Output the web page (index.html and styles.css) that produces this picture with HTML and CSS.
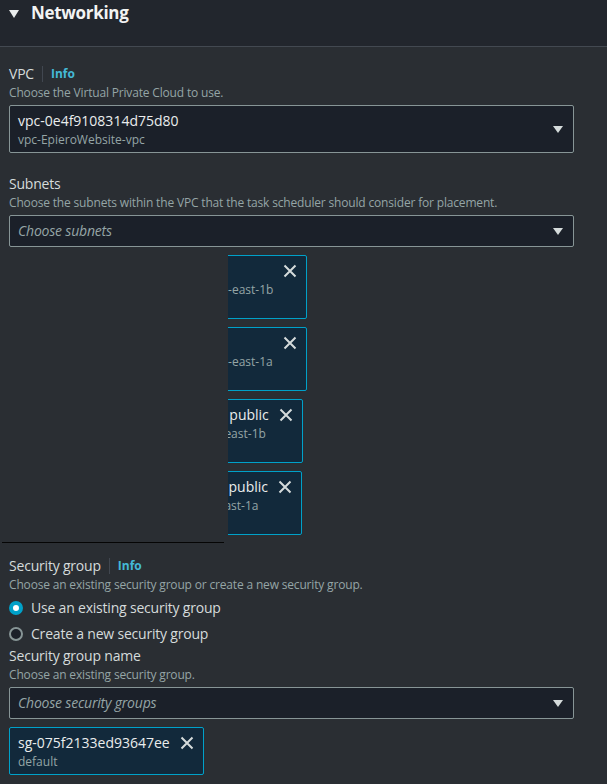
FILE: index.html
```html
<!DOCTYPE html>
<html lang="en">
<head>
    <meta charset="UTF-8">
    <meta name="viewport" content="width=device-width, initial-scale=1.0">
    <title>Networking</title>
    <link rel="stylesheet" href="styles.css">
</head>
<body>
    <div class="panel">
        <!-- section header -->
        <div class="panel-header">
            <span class="expand-icon"></span>
            <h2 class="panel-title">Networking</h2>
        </div>

        <div class="panel-body">
            <!-- VPC -->
            <div class="field">
                <div class="field-label">VPC <a class="info-link">Info</a></div>
                <div class="field-desc">Choose the Virtual Private Cloud to use.</div>
                <div class="select">
                    <div class="select-value">
                        <div class="select-main">vpc-0e4f9108314d75d80</div>
                        <div class="select-sub">vpc-EpieroWebsite-vpc</div>
                    </div>
                    <span class="select-caret"></span>
                </div>
            </div>

            <!-- Subnets -->
            <div class="field">
                <div class="field-label">Subnets</div>
                <div class="field-desc">Choose the subnets within the VPC that the task scheduler should consider for placement.</div>
                <div class="select">
                    <div class="select-placeholder">Choose subnets</div>
                    <span class="select-caret"></span>
                </div>
                <div class="token-list">
                    <div class="token">
                        <div class="token-text">
                            <div class="token-main">subnet-0b47e2c9a1d36f58e</div>
                            <div class="token-sub">EpieroWebsite-subnet-private2-lbs-us-east-1b</div>
                            <div class="token-sub">10.0.144.0/20</div>
                        </div>
                        <span class="token-dismiss"><svg viewBox="0 0 14 14"><path d="M1.5 1.5l11 11M12.5 1.5l-11 11"/></svg></span>
                    </div>
                    <div class="token">
                        <div class="token-text">
                            <div class="token-main">subnet-06a1f3d8c2e95b74d</div>
                            <div class="token-sub">EpieroWebsite-subnet-private1-lbs-us-east-1a</div>
                            <div class="token-sub">10.0.128.0/20</div>
                        </div>
                        <span class="token-dismiss"><svg viewBox="0 0 14 14"><path d="M1.5 1.5l11 11M12.5 1.5l-11 11"/></svg></span>
                    </div>
                    <div class="token">
                        <div class="token-text">
                            <div class="token-main">EpieroWebsite-subnet-useast1b public</div>
                            <div class="token-sub">subnet-0c93e1a7b5d2f4e | Zone: us-east-1b</div>
                            <div class="token-sub">10.0.16.0/20</div>
                        </div>
                        <span class="token-dismiss"><svg viewBox="0 0 14 14"><path d="M1.5 1.5l11 11M12.5 1.5l-11 11"/></svg></span>
                    </div>
                    <div class="token">
                        <div class="token-text">
                            <div class="token-main">EpieroWebsite-subnet-useast1a public</div>
                            <div class="token-sub">subnet-0e5d8b2a4c1f73 | Zone: us-east-1a</div>
                            <div class="token-sub">10.0.0.0/20</div>
                        </div>
                        <span class="token-dismiss"><svg viewBox="0 0 14 14"><path d="M1.5 1.5l11 11M12.5 1.5l-11 11"/></svg></span>
                    </div>
                    <!-- covered area of the capture -->
                    <div class="mask"></div>
                </div>
            </div>

            <!-- Security group -->
            <div class="field">
                <div class="field-label">Security group <a class="info-link">Info</a></div>
                <div class="field-desc">Choose an existing security group or create a new security group.</div>
                <div class="radio-group">
                    <label class="radio">
                        <span class="radio-dot checked"></span>
                        Use an existing security group
                    </label>
                    <label class="radio">
                        <span class="radio-dot"></span>
                        Create a new security group
                    </label>
                </div>
                <div class="field-label">Security group name</div>
                <div class="field-desc">Choose an existing security group.</div>
                <div class="select">
                    <div class="select-placeholder">Choose security groups</div>
                    <span class="select-caret"></span>
                </div>
                <div class="token-list">
                    <div class="token">
                        <div class="token-text">
                            <div class="token-main">sg-075f2133ed93647ee</div>
                            <div class="token-sub">default</div>
                        </div>
                        <span class="token-dismiss"><svg viewBox="0 0 14 14"><path d="M1.5 1.5l11 11M12.5 1.5l-11 11"/></svg></span>
                    </div>
                </div>
            </div>
        </div>
    </div>
</body>
</html>
```

FILE: styles.css
```css
body {
    margin: 0;
    background: #2a2e33;
    font-family: "Open Sans", "Noto Sans", sans-serif;
    color: #d5dbdb;
    overflow: hidden;
}

.panel-header {
    display: flex;
    align-items: flex-start;
    height: 46px;
    background: #22262d;
    border-bottom: 1px solid #434951;
}

.expand-icon {
    width: 0;
    height: 0;
    margin: 10px 12px 0 9px;
    border-left: 5px solid transparent;
    border-right: 5px solid transparent;
    border-top: 8px solid #eaeded;
}

.panel-title {
    margin: 1px 0 0;
    font-size: 17px;
    line-height: 24px;
    font-weight: 700;
    letter-spacing: -0.3px;
    color: #f2f3f3;
}

.panel-body {
    padding: 16px 33px 0 9px;
}

.field {
    margin-bottom: 20px;
}

.field-label {
    display: flex;
    align-items: center;
    font-size: 14px;
    line-height: 22px;
    letter-spacing: -0.2px;
    color: #d5dbdb;
}

.info-link {
    margin-left: 8px;
    padding-left: 8px;
    border-left: 1px solid #414750;
    font-size: 12px;
    line-height: 16px;
    font-weight: 700;
    letter-spacing: 0;
    color: #44b9d6;
}

.field-desc {
    font-size: 12px;
    line-height: 16px;
    letter-spacing: -0.17px;
    color: #95a5a6;
}

.select {
    display: flex;
    align-items: center;
    margin-top: 4px;
    padding: 4px 10px 4px 8px;
    background: #1b2029;
    border: 1px solid #879596;
    border-radius: 2px;
}

.select-value,
.select-placeholder {
    flex: 1;
}

.select-main {
    font-size: 14px;
    line-height: 22px;
    color: #eaeded;
}

.select-sub {
    font-size: 12px;
    line-height: 16px;
    color: #95a5a6;
}

.select-placeholder {
    font-size: 14px;
    line-height: 22px;
    font-style: italic;
    letter-spacing: -0.2px;
    color: #95a5a6;
}

.select-caret {
    width: 0;
    height: 0;
    border-left: 5px solid transparent;
    border-right: 5px solid transparent;
    border-top: 7px solid #d5dbdb;
}

.token-list {
    position: relative;
    display: flex;
    flex-direction: column;
    align-items: flex-start;
    gap: 8px;
    margin-top: 8px;
}

.token {
    display: flex;
    align-items: flex-start;
    padding: 4px 9px 4px 8px;
    background: #12293b;
    border: 1px solid #00a1c9;
    border-radius: 2px;
}

.token-main {
    font-size: 14px;
    line-height: 22px;
    color: #eaeded;
    white-space: nowrap;
}

.token-sub {
    font-size: 12px;
    line-height: 16px;
    color: #95a5a6;
    white-space: nowrap;
}

.token-dismiss {
    margin: 4px 0 0 10px;
    width: 14px;
    height: 14px;
}

.token-dismiss svg {
    display: block;
    width: 14px;
    height: 14px;
    stroke: #d5dbdb;
    stroke-width: 2;
    fill: none;
}

.mask {
    position: absolute;
    left: -9px;
    top: -5px;
    width: 228px;
    height: 292px;
    background: #2a2e33;
}

.mask::after {
    content: "";
    position: absolute;
    left: 2px;
    top: 292px;
    width: 222px;
    height: 1px;
    background: #050505;
}

.radio-group {
    display: flex;
    flex-direction: column;
    gap: 4px;
    margin-top: 4px;
}

.radio {
    display: flex;
    align-items: center;
    gap: 8px;
    font-size: 14px;
    line-height: 22px;
    letter-spacing: -0.2px;
    color: #d5dbdb;
}

.radio-dot {
    box-sizing: border-box;
    width: 14px;
    height: 14px;
    border-radius: 50%;
    border: 2px solid #879596;
    background: #1b2029;
}

.radio-dot.checked {
    border: 4.5px solid #00a1c9;
    background: #fff;
}
```
